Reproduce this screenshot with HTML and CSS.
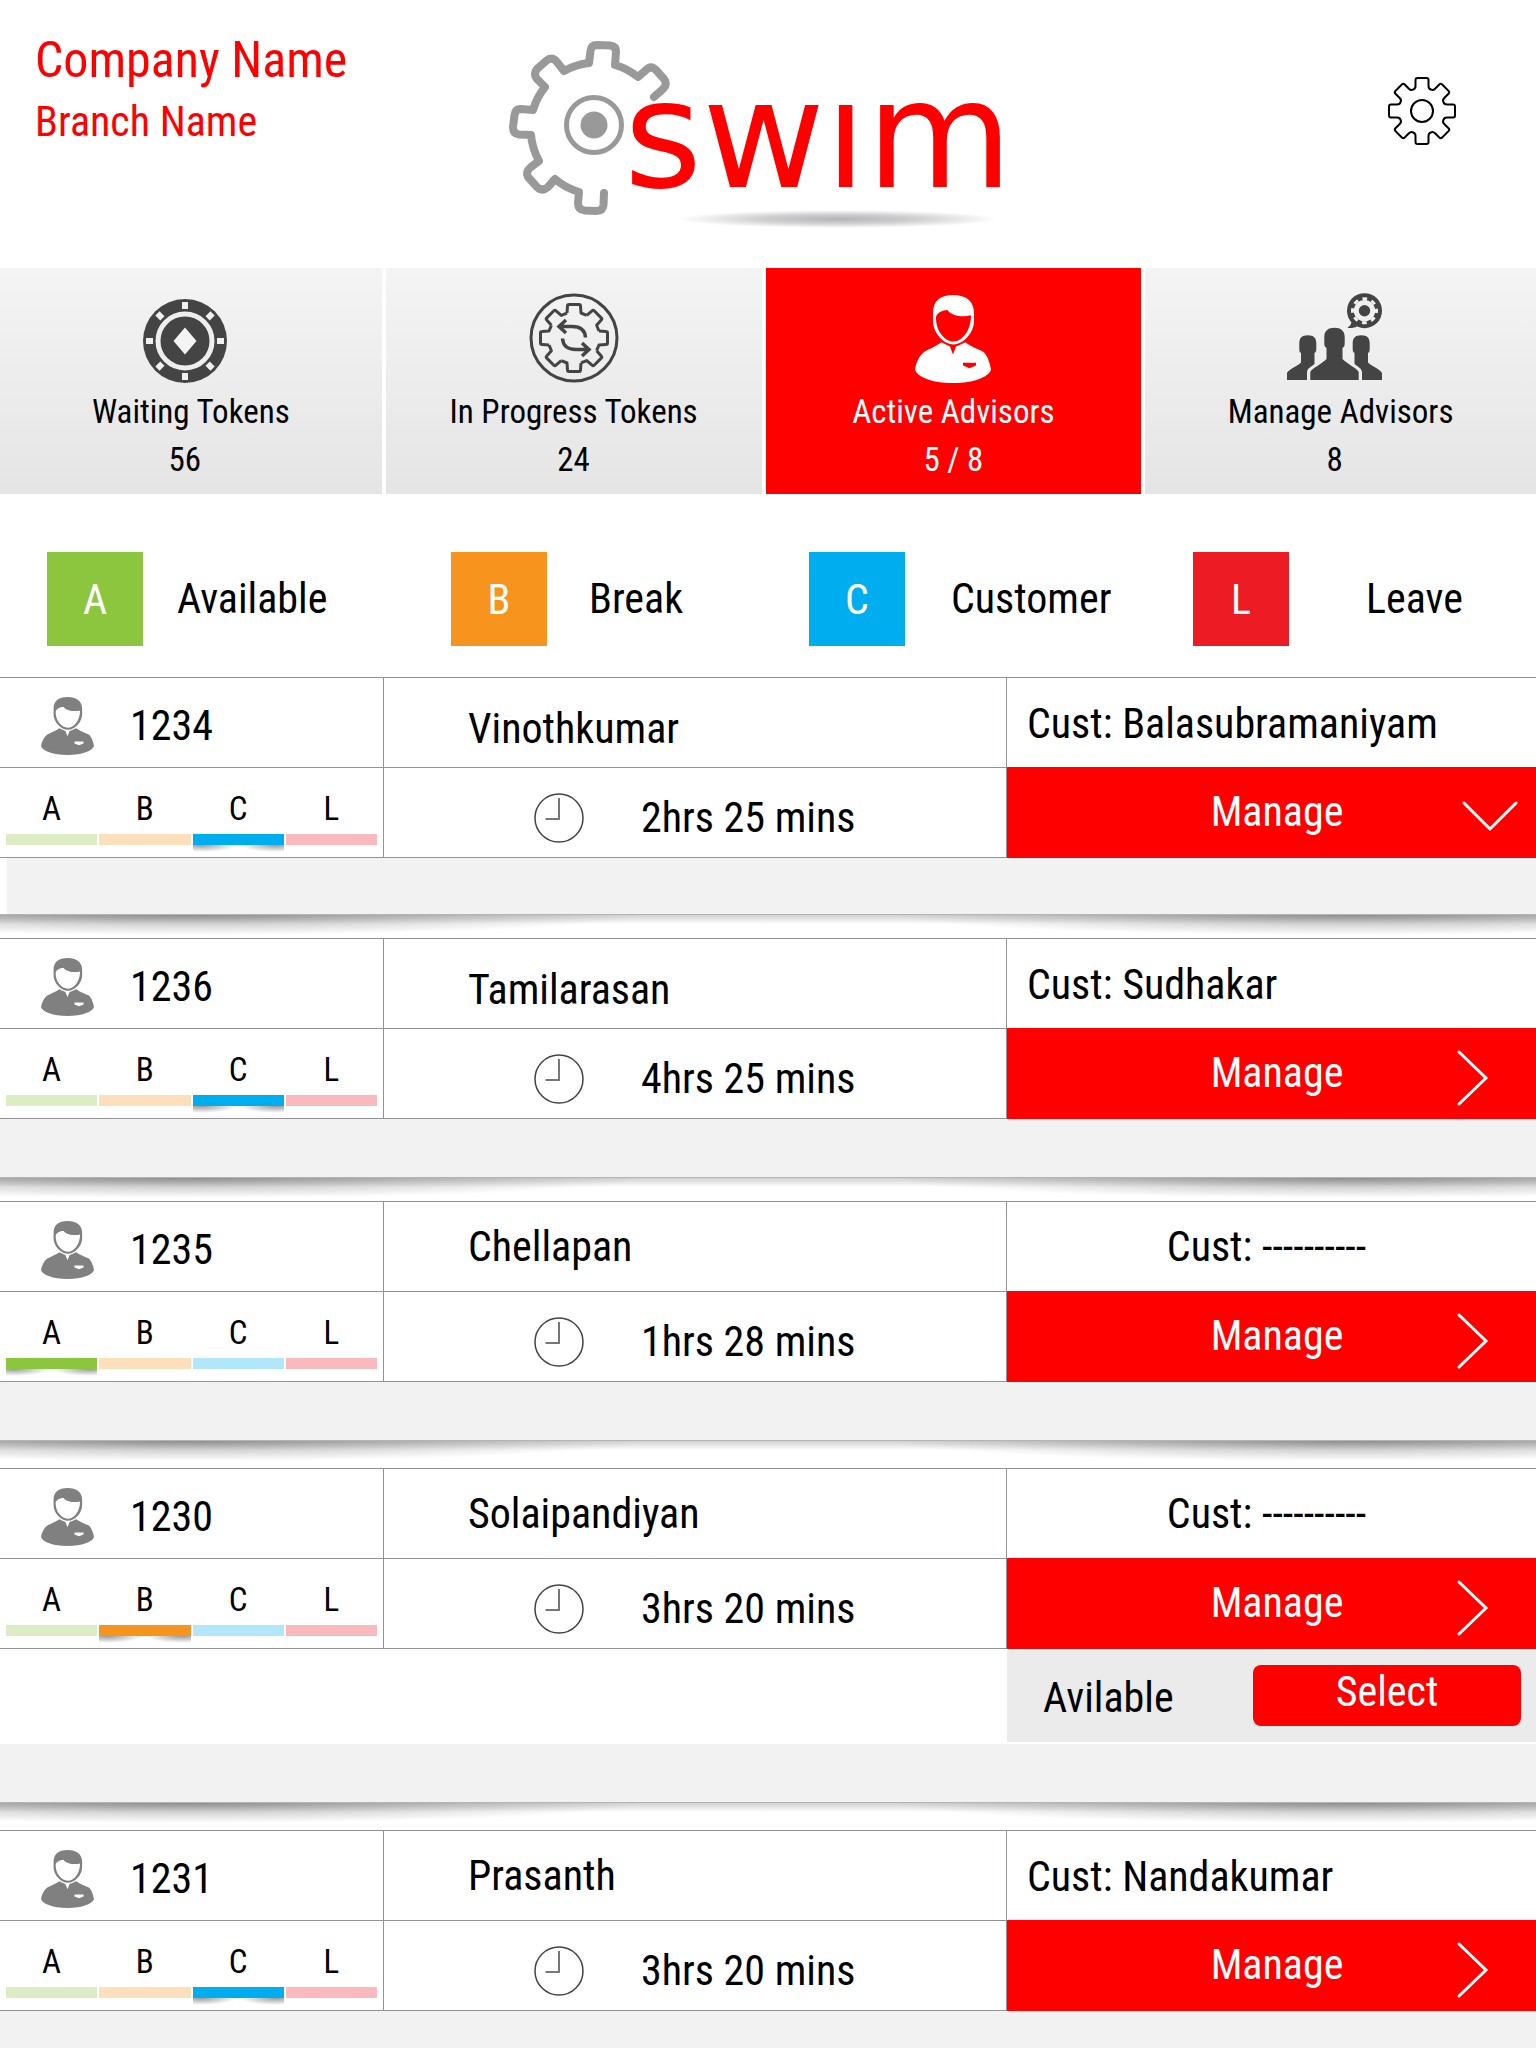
FILE: index.html
```html
<!DOCTYPE html>
<html lang="en">
<head>
<meta charset="utf-8">
<meta name="viewport" content="width=device-width, initial-scale=1">
<title>Swim – Active Advisors</title>
<link rel="stylesheet" href="styles.css">
</head>
<body>
<svg class="defs" aria-hidden="true">
  <symbol id="person" viewBox="0 0 76 88" preserveAspectRatio="none">
    <path fill-rule="evenodd" d="M38 0C51 0 59 6 59 18V26C59 38 48 49.500 38.500 49.500S18 38 18 26V18C18 6 25 0 38 0ZM21 22C20.500 36 30 46.500 38.500 46.500S56 36 56 20.300C48 22.500 36 21 32.500 15C27 15 22 18 21 22Z"/>
    <path fill-rule="evenodd" d="M26.500 47.300C32 50 34 51 35 51.500L38 59.500L41 51.500C43 51 47 49 50.500 47.300C56 52 63 54 68.500 57C73 61 75 69 76 74.500C74 82 59 88 38 88S2 82 0 74.500C1 68 4 61 9 57C14 54 20 52 26.500 47.300ZM48 67.700V70.500L54.500 73.200L61 70.500V67.700Z"/>
  </symbol>
  <symbol id="clock" viewBox="0 0 50 50">
    <circle cx="25" cy="25" r="24" fill="none" stroke="#444" stroke-width="1.500"/>
    <path d="M25 5V26H11.500" fill="none" stroke="#777" stroke-width="2"/>
  </symbol>
  <symbol id="chevron-right" viewBox="0 0 64 60">
    <path d="M3 4L30 30L3 56" fill="none" stroke="#fff" stroke-width="3" stroke-linecap="round"/>
  </symbol>
  <symbol id="chevron-down" viewBox="0 0 64 60">
    <path d="M8 16L34 42L60 16" fill="none" stroke="#fff" stroke-width="3" stroke-linecap="round"/>
  </symbol>
</svg>

<header class="header">
  <div class="company">
    <h1 class="company-name">Company Name</h1>
    <p class="branch-name">Branch Name</p>
  </div>
  <svg class="logo" viewBox="0 0 560 230" role="img" aria-label="swim">
    <defs>
      <radialGradient id="logo-shadow">
        <stop offset="0" stop-color="#b4b4b6"/>
        <stop offset=".5" stop-color="#d0d0d2"/>
        <stop offset="1" stop-color="#fff"/>
      </radialGradient>
      <clipPath id="x-height"><rect x="120" y="82" width="440" height="96"/></clipPath>
    </defs>
    <ellipse cx="348" cy="199" rx="160" ry="9" fill="url(#logo-shadow)"/>
    <path d="M164 77L173 69Q178 64 174 59L166 50Q161 45 156 50L148 57A66 66 0 0 0 125 45L126 32Q126 26 120 25.500L107 25Q101 25 100.500 31L99 43A66 66 0 0 0 74 51L67 42Q62 36 56 41L47 49Q43 54 47 59L55 67A66 66 0 0 0 43 90L31 89Q25 89 24.500 95L23 107Q23 114 29 114.500L41 115A66 66 0 0 0 49 141L41 147Q35 152 38 157L47 167Q52 172 58 167L65 159A66 66 0 0 0 89 172L88 183Q88 190 95 190.500L106 191Q113 191 113.500 185L114 173" fill="none" stroke="#999" stroke-width="8" stroke-linecap="round" stroke-linejoin="round"/>
    <circle cx="104" cy="105" r="27.500" fill="none" stroke="#999" stroke-width="5"/>
    <circle cx="104" cy="105" r="13.500" fill="#999"/>
    <text class="logo-text" x="134" y="167" clip-path="url(#x-height)">swim</text>
  </svg>
  <button class="settings" type="button" aria-label="Settings">
    <svg viewBox="-35 -35 70 70" width="70" height="70" fill="none" stroke="#000" stroke-width="2">
      <g id="cog-pair">
        <path id="cog-tooth" d="M-9 -21.500Q-6.500 -22 -6.500 -25V-31Q-6.500 -33 -4.500 -33H4.500Q6.500 -33 6.500 -31V-25Q6.500 -22 9 -21.500"/>
        <use href="#cog-tooth" transform="rotate(45)"/>
      </g>
      <use href="#cog-pair" transform="rotate(90)"/>
      <use href="#cog-pair" transform="rotate(180)"/>
      <use href="#cog-pair" transform="rotate(270)"/>
      <circle r="11"/>
    </svg>
  </button>
</header>

<nav class="tabs" aria-label="Sections">
  <a class="tab tab--inset" href="#waiting">
    <span class="tab-icon">
      <svg viewBox="-42 -42 84 84" width="84" height="84">
        <circle r="42" fill="#444"/>
        <circle r="27" fill="none" stroke="#eee" stroke-width="5"/>
        <path d="M0 -13.500L11.500 0L0 13.500L-11.500 0Z" fill="#f4f4f4"/>
        <g id="chip-marks" fill="#f0f0f0">
          <rect id="chip-mark" x="-3" y="-39" width="6" height="7"/>
          <use href="#chip-mark" transform="rotate(45)"/>
          <use href="#chip-mark" transform="rotate(90)"/>
          <use href="#chip-mark" transform="rotate(135)"/>
        </g>
        <use href="#chip-marks" transform="rotate(180)"/>
      </svg>
    </span>
    <span class="tab-label">Waiting Tokens</span>
    <span class="tab-count">56</span>
  </a>
  <a class="tab" href="#progress">
    <span class="tab-icon">
      <svg viewBox="-45 -45 90 90" width="90" height="90" fill="none" stroke="#444" stroke-width="3">
        <circle r="43"/>
        <g id="gear-pair" stroke-linejoin="round">
          <path id="gear-tooth" d="M-7 -25L-6.500 -32Q-6.500 -33.500 -5 -33.500H5Q6.500 -33.500 6.500 -32L7 -25L12.700 -22.600"/>
          <use href="#gear-tooth" transform="rotate(45)"/>
        </g>
        <use href="#gear-pair" transform="rotate(90)"/>
        <use href="#gear-pair" transform="rotate(180)"/>
        <use href="#gear-pair" transform="rotate(270)"/>
        <g id="arrow" stroke-width="3.500"><path d="M11.500 -.500C11 -8 6 -11.500 -2 -11.500H-15M-8 -18L-15 -11.500L-8 -5"/></g>
        <use href="#arrow" transform="rotate(180)"/>
      </svg>
    </span>
    <span class="tab-label">In Progress Tokens</span>
    <span class="tab-count">24</span>
  </a>
  <a class="tab tab--active" href="#active" aria-current="page">
    <span class="tab-icon"><svg width="76" height="88" fill="#fff"><use href="#person"/></svg></span>
    <span class="tab-label">Active Advisors</span>
    <span class="tab-count">5 / 8</span>
  </a>
  <a class="tab tab--inset" href="#manage">
    <span class="tab-icon">
      <svg viewBox="0 0 95 90" width="95" height="90" fill="#444">
        <path d="M23.300 87V79C25 75 35 71 39.500 66V55C37.500 54 37.300 52 37.300 50V44C37.300 38 41 34.700 47.500 34.700S57.700 38 57.700 44V50C57.700 52 57.500 54 55.500 55V66C60 71 70 75 71.700 79V87Z"/>
        <path d="M0 87V80C2 76 11 73 14 69.500V60C12.500 59 12.300 58 12.300 56V50C12.300 45 15 42.300 20.800 42.300S29.300 45 29.300 50V56C29.300 58 29 59 27.500 60V71C24 74 20.500 75 20 79V87Z"/>
        <path d="M95 87V80C93 76 84 73 81 69.500V60C82.500 59 82.700 58 82.700 56V50C82.700 45 80 42.300 74.200 42.300S65.700 45 65.700 50V56C65.700 58 66 59 67.500 60V71C71 74 74.500 75 75 79V87Z"/>
        <path d="M70 33.500C67 35 63 35.500 60.300 34.500C63 33.500 64 31.500 64.500 29Z"/>
        <circle cx="77.500" cy="17.700" r="17.500"/>
        <circle cx="77.500" cy="17.700" r="8.200" fill="none" stroke="#f0f0f0" stroke-width="5"/>
        <circle cx="77.500" cy="17.700" r="12" fill="none" stroke="#f0f0f0" stroke-width="3" stroke-dasharray="4.700" stroke-dashoffset="2.300"/>
      </svg>
    </span>
    <span class="tab-label">Manage Advisors</span>
    <span class="tab-count">8</span>
  </a>
</nav>

<main class="main">
  <ul class="legend">
    <li class="legend-item"><span class="badge badge--a">A</span><span class="legend-label">Available</span></li>
    <li class="legend-item"><span class="badge badge--b">B</span><span class="legend-label">Break</span></li>
    <li class="legend-item"><span class="badge badge--c">C</span><span class="legend-label">Customer</span></li>
    <li class="legend-item"><span class="badge badge--l">L</span><span class="legend-label">Leave</span></li>
  </ul>

  <article class="advisor advisor--open">
    <div class="grid">
      <div class="cell cell--id"><svg class="avatar"><use href="#person"/></svg><span>1234</span></div>
      <div class="cell cell--name cell--low">Vinothkumar</div>
      <div class="cell cell--cust">Cust: Balasubramaniyam</div>
      <div class="cell cell--status"><span class="status status--a">A</span><span class="status status--b">B</span><span class="status status--c status--on">C</span><span class="status status--l">L</span></div>
      <div class="cell cell--time"><svg class="clock"><use href="#clock"/></svg><span>2hrs 25 mins</span></div>
      <button class="manage" type="button" aria-expanded="true"><span class="manage-text">Manage</span><svg class="chevron"><use href="#chevron-down"/></svg></button>
    </div>
    <div class="band"></div>
    <div class="shade"></div>
  </article>

  <article class="advisor">
    <div class="grid">
      <div class="cell cell--id"><svg class="avatar"><use href="#person"/></svg><span>1236</span></div>
      <div class="cell cell--name cell--low">Tamilarasan</div>
      <div class="cell cell--cust">Cust: Sudhakar</div>
      <div class="cell cell--status"><span class="status status--a">A</span><span class="status status--b">B</span><span class="status status--c status--on">C</span><span class="status status--l">L</span></div>
      <div class="cell cell--time"><svg class="clock"><use href="#clock"/></svg><span>4hrs 25 mins</span></div>
      <button class="manage" type="button"><span class="manage-text">Manage</span><svg class="chevron"><use href="#chevron-right"/></svg></button>
    </div>
    <div class="band"></div>
    <div class="shade"></div>
  </article>

  <article class="advisor">
    <div class="grid">
      <div class="cell cell--id"><svg class="avatar"><use href="#person"/></svg><span>1235</span></div>
      <div class="cell cell--name">Chellapan</div>
      <div class="cell cell--cust cell--none">Cust: ----------</div>
      <div class="cell cell--status"><span class="status status--a status--on">A</span><span class="status status--b">B</span><span class="status status--c">C</span><span class="status status--l">L</span></div>
      <div class="cell cell--time"><svg class="clock"><use href="#clock"/></svg><span>1hrs 28 mins</span></div>
      <button class="manage" type="button"><span class="manage-text">Manage</span><svg class="chevron"><use href="#chevron-right"/></svg></button>
    </div>
    <div class="band"></div>
    <div class="shade shade--tall"></div>
  </article>

  <article class="advisor">
    <div class="grid">
      <div class="cell cell--id"><svg class="avatar"><use href="#person"/></svg><span>1230</span></div>
      <div class="cell cell--name">Solaipandiyan</div>
      <div class="cell cell--cust cell--none">Cust: ----------</div>
      <div class="cell cell--status"><span class="status status--a">A</span><span class="status status--b status--on">B</span><span class="status status--c">C</span><span class="status status--l">L</span></div>
      <div class="cell cell--time"><svg class="clock"><use href="#clock"/></svg><span>3hrs 20 mins</span></div>
      <button class="manage" type="button"><span class="manage-text">Manage</span><svg class="chevron"><use href="#chevron-right"/></svg></button>
      <div class="option"><span class="option-label">Avilable</span><button class="select" type="button">Select</button></div>
    </div>
    <div class="band"></div>
    <div class="shade shade--tall"></div>
  </article>

  <article class="advisor advisor--last">
    <div class="grid">
      <div class="cell cell--id"><svg class="avatar"><use href="#person"/></svg><span>1231</span></div>
      <div class="cell cell--name">Prasanth</div>
      <div class="cell cell--cust">Cust: Nandakumar</div>
      <div class="cell cell--status"><span class="status status--a">A</span><span class="status status--b">B</span><span class="status status--c status--on">C</span><span class="status status--l">L</span></div>
      <div class="cell cell--time"><svg class="clock"><use href="#clock"/></svg><span>3hrs 20 mins</span></div>
      <button class="manage" type="button"><span class="manage-text">Manage</span><svg class="chevron"><use href="#chevron-right"/></svg></button>
    </div>
    <div class="band"></div>
  </article>
</main>
</body>
</html>
```
FILE: styles.css
```css
:root {
  --red: #ff0000;
  --line: #919396;
  --band: #f2f2f2;
  --green: #8cc63f;
  --orange: #f7941e;
  --blue: #00aeef;
  --leave: #ed1c24;
}

* {
  box-sizing: border-box;
}

body {
  margin: 0;
  min-height: 100vh;
  display: flex;
  flex-direction: column;
  background: #fff;
  color: #000;
  font-family: "Roboto Condensed", Roboto, "Liberation Sans", sans-serif;
  font-size: 42px;
  line-height: 48px;
}

button {
  border: 0;
  padding: 0;
  background: none;
  color: inherit;
  font: inherit;
  cursor: pointer;
}

svg {
  display: block;
}

.defs {
  position: absolute;
  width: 0;
  height: 0;
}

/* Header */
.header {
  display: grid;
  grid-template-columns: 1fr auto 1fr;
  align-items: start;
  padding: 20px 32px 18px 35px;
}

.company {
  padding-top: 10px;
  color: var(--red);
}

.company-name,
.branch-name {
  margin: 0;
  font-weight: 400;
}

.company-name {
  font-size: 50px;
  line-height: 60px;
}

.branch-name {
  padding-top: 8px;
}

.logo {
  width: 560px;
  height: 230px;
}

.logo-text {
  font-family: "DejaVu Sans", sans-serif;
  font-size: 150px;
  fill: var(--red);
}

.settings {
  justify-self: end;
  margin: 56px 47px 0 0;
}

/* Tabs */
.tabs {
  display: grid;
  grid-template-columns: 382fr 376fr 376fr 391fr;
  gap: 4px;
}

.tab {
  display: flex;
  flex-direction: column;
  align-items: center;
  padding: 25px 0 14px;
  background: linear-gradient(#f4f4f4, #e5e5e5);
  color: inherit;
  font-size: 33px;
  line-height: 40px;
  text-decoration: none;
}

.tab--active {
  background: var(--red);
  color: #fff;
}

.tab-icon {
  display: flex;
  align-items: flex-end;
  height: 90px;
  margin-bottom: 9px;
}

.tab-count {
  margin-top: 8px;
}

.tab--inset .tab-icon,
.tab--inset .tab-count {
  padding-right: 12px;
}

/* Legend */
.main {
  flex: 1;
  display: flex;
  flex-direction: column;
}

.legend {
  display: grid;
  grid-template-columns: 404fr 358fr 384fr 343fr;
  margin: 0;
  padding: 58px 0 31px 47px;
  list-style: none;
}

.legend-item {
  display: flex;
  align-items: center;
  gap: 34px;
}

.legend-item:nth-child(2) {
  gap: 42px;
}

.legend-item:nth-child(3) {
  gap: 46px;
}

.legend-item:nth-child(4) {
  gap: 77px;
}

.badge {
  width: 96px;
  height: 94px;
  color: #fff;
  line-height: 96px;
  text-align: center;
}

.badge--a { background: var(--green); }
.badge--b { background: var(--orange); }
.badge--c { background: var(--blue); }
.badge--l { background: var(--leave); }

/* Advisor rows */
.grid {
  display: grid;
  grid-template-columns: 384fr 623fr 529fr;
  grid-template-rows: 90px 91px;
}

.cell {
  display: flex;
  align-items: center;
  border-top: 1px solid var(--line);
}

.cell--id,
.cell--name,
.cell--status,
.cell--time {
  border-right: 1px solid var(--line);
}

.cell--status,
.cell--time {
  border-bottom: 1px solid var(--line);
}

.cell--id {
  gap: 36px;
  padding: 6px 0 0 41px;
}

.avatar {
  width: 53px;
  height: 58px;
  fill: #808080;
}

.cell--name {
  padding-left: 84px;
}

.cell--low {
  padding-top: 12px;
}

.cell--cust {
  padding: 2px 0 0 20px;
}

.cell--none {
  justify-content: center;
  padding: 0 10px 0 0;
}

.cell--status {
  align-items: flex-start;
  gap: 2px;
  padding: 20px 6px 0;
}

.status {
  flex: 1;
  position: relative;
  padding-bottom: 15px;
  font-size: 33px;
  line-height: 42px;
  text-align: center;
}

.status::before {
  content: "";
  position: absolute;
  inset: auto 0 0;
  height: 11px;
  background: currentColor;
}

.status--a::before { background: #dcedc5; }
.status--b::before { background: #fddfbc; }
.status--c::before { background: #b2e6fa; }
.status--l::before { background: #fab9bd; }

.status--a.status--on::before { background: var(--green); }
.status--b.status--on::before { background: var(--orange); }
.status--c.status--on::before { background: var(--blue); }

.status--on::after {
  content: "";
  position: absolute;
  inset: 100% 0 auto;
  height: 7px;
  background:
    radial-gradient(ellipse 36px 7px at 8px 0, rgba(0, 0, 0, .4), transparent),
    radial-gradient(ellipse 36px 7px at 83px 0, rgba(0, 0, 0, .4), transparent);
}

.cell--time {
  gap: 57px;
  padding: 10px 0 0 150px;
}

.clock {
  width: 50px;
  height: 50px;
}

.manage {
  display: grid;
  grid-template-columns: 1fr 64px;
  align-items: center;
  padding: 0 16px 0 91px;
  background: var(--red);
  color: #fff;
}

.manage-text {
  padding-bottom: 1px;
}

.chevron {
  width: 64px;
  height: 60px;
  margin-top: 8px;
}

/* Option panel under an expanded advisor */
.option {
  grid-column: 3;
  display: flex;
  align-items: center;
  justify-content: space-between;
  height: 91px;
  margin: 2px 0;
  padding: 0 15px 2px 36px;
  background: #ebebeb;
}

.option-label {
  padding-top: 4px;
}

.select {
  width: 268px;
  height: 61px;
  padding-bottom: 8px;
  border-radius: 8px;
  background: var(--red);
  color: #fff;
}

.band {
  height: 58px;
  background: var(--band);
}

.advisor--open .band {
  height: 56px;
  margin-left: 7px;
}

.shade {
  height: 24px;
  border-top: 1px solid #b4b4b4;
  background:
    radial-gradient(ellipse 460px 20px at 12% 0, rgba(0, 0, 0, .32), transparent),
    radial-gradient(ellipse 460px 20px at 88% 0, rgba(0, 0, 0, .32), transparent),
    linear-gradient(rgba(0, 0, 0, .18), transparent 9px);
}

.shade--tall {
  height: 28px;
}

.advisor--last {
  flex: 1;
  display: flex;
  flex-direction: column;
}

.advisor--last .band {
  flex: 1;
  height: auto;
  min-height: 37px;
}
```
